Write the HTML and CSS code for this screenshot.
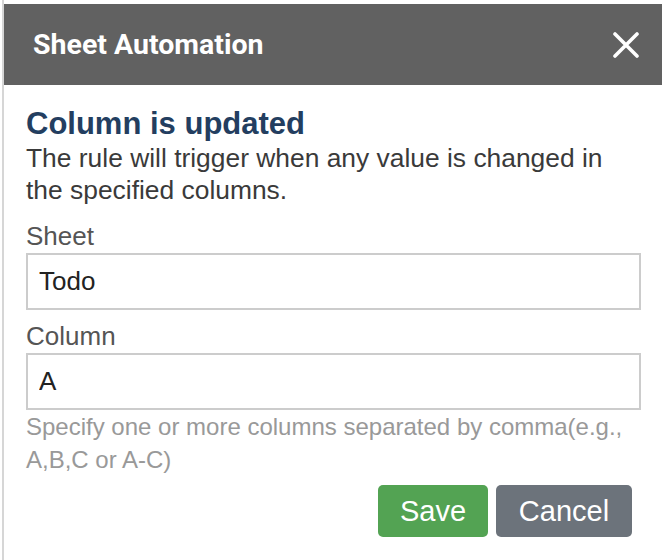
FILE: index.html
```html
<!DOCTYPE html>
<html>
<head>
    <meta charset="UTF-8">
    <link rel="stylesheet" href="styles.css">
</head>
<body>
<div class="page">
    <div class="dialog">
        <div class="dialog-header">
            <span class="dialog-title">Sheet Automation</span>
            <span class="dialog-close">
                <svg width="26" height="26" viewBox="0 0 26 26">
                    <path d="M2 2 L24 24 M24 2 L2 24" stroke="#ffffff" stroke-width="3.6" stroke-linecap="round"/>
                </svg>
            </span>
        </div>
        <div class="dialog-body">
            <h2 class="rule-title">Column is updated</h2>
            <p class="rule-desc">The rule will trigger when any value is changed in the specified columns.</p>

            <div class="form-group">
                <label for="sheet">Sheet</label>
                <input type="text" id="sheet" value="Todo">
            </div>

            <div class="form-group">
                <label for="column">Column</label>
                <input type="text" id="column" value="A">
                <div class="help">Specify one or more columns separated by comma(e.g., A,B,C or A-C)</div>
            </div>

            <div class="actions">
                <button class="btn btn-save">Save</button>
                <button class="btn btn-cancel">Cancel</button>
            </div>
        </div>
    </div>
</div>
</body>
</html>
```

FILE: styles.css
```css
* {
    margin: 0;
    padding: 0;
    box-sizing: border-box;
}

body {
    background-color: #ffffff;
    font-family: "Liberation Sans", Arial, sans-serif;
    overflow: hidden;
}

.page {
    margin-left: 2px;
    border-left: 2px solid #d6d6d6;
    padding-top: 4px;
    height: 560px;
}

.dialog {
    width: 659px;
    background-color: #ffffff;
}

.dialog-header {
    height: 81px;
    background-color: #616161;
    display: flex;
    align-items: center;
    justify-content: space-between;
    padding: 0 22px 0 29px;
}

.dialog-title {
    font-family: Roboto, "Liberation Sans", sans-serif;
    font-weight: bold;
    font-size: 28.5px;
    color: #ffffff;
}

.dialog-close {
    display: flex;
    margin-right: 2px;
}

.dialog-body {
    padding: 21px 22px 0 22px;
}

.rule-title {
    font-size: 31px;
    line-height: 36px;
    font-weight: bold;
    color: #233e60;
}

.rule-desc {
    font-size: 26.4px;
    line-height: 32px;
    color: #3a3a3a;
    padding-bottom: 4px;
}

.form-group {
    padding-top: 10px;
}

.form-group label {
    display: block;
    font-size: 26px;
    line-height: 32px;
    color: #555555;
    margin-bottom: 1px;
}

.form-group input {
    display: block;
    width: 615px;
    height: 57px;
    border: 2px solid #cccccc;
    padding: 0 11px;
    font-family: "Liberation Sans", Arial, sans-serif;
    font-size: 26px;
    color: #222222;
    outline: none;
}

.help {
    font-size: 24px;
    line-height: 33px;
    color: #999999;
}

.actions {
    display: flex;
    justify-content: flex-end;
    gap: 8px;
    margin-top: 9px;
    padding-right: 9px;
}

.btn {
    height: 52px;
    border: none;
    border-radius: 5px;
    font-family: "Liberation Sans", Arial, sans-serif;
    font-size: 29px;
    color: #ffffff;
    text-align: center;
}

.btn-save {
    width: 110px;
    background-color: #53a353;
}

.btn-cancel {
    width: 136px;
    background-color: #6c737b;
}
```
